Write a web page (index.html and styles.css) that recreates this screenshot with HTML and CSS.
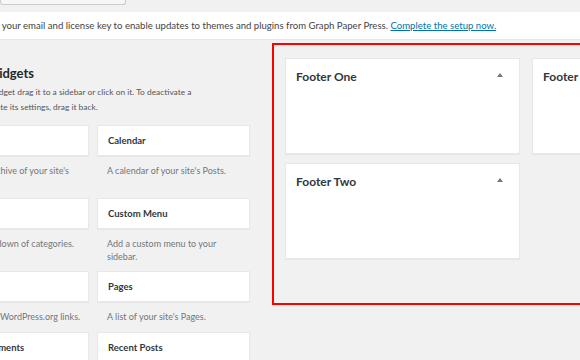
FILE: index.html
```html
<!DOCTYPE html>
<html>
<head>
    <title>Widgets</title>
    <link rel="stylesheet" href="styles.css">
</head>
<body>
    <div class="top-bar">
        <span class="top-button"></span>
    </div>
    <div class="notice">
        <p>Enter your email and license key to enable updates to themes and plugins from Graph Paper Press. <a href="#">Complete the setup now.</a></p>
    </div>
    <div class="widgets-area">
        <div class="available">
            <h2>Available Widgets</h2>
            <p class="intro">To activate a widget drag it to a sidebar or click on it. To deactivate a<br>widget and delete its settings, drag it back.</p>
            <div class="widget-list">
                <div class="widget">
                    <div class="widget-top">Archives</div>
                    <p class="widget-desc">A monthly archive of your site's<br>Posts.</p>
                </div>
                <div class="widget">
                    <div class="widget-top">Calendar</div>
                    <p class="widget-desc">A calendar of your site's Posts.</p>
                </div>
                <div class="widget">
                    <div class="widget-top">Categories</div>
                    <p class="widget-desc">A list or dropdown of categories.</p>
                </div>
                <div class="widget">
                    <div class="widget-top">Custom Menu</div>
                    <p class="widget-desc">Add a custom menu to your<br>sidebar.</p>
                </div>
                <div class="widget">
                    <div class="widget-top">Meta</div>
                    <p class="widget-desc">Login, RSS, &amp; WordPress.org links.</p>
                </div>
                <div class="widget">
                    <div class="widget-top">Pages</div>
                    <p class="widget-desc">A list of your site's Pages.</p>
                </div>
                <div class="widget">
                    <div class="widget-top">Recent Comments</div>
                    <p class="widget-desc">Your site's most recent comments.</p>
                </div>
                <div class="widget">
                    <div class="widget-top">Recent Posts</div>
                    <p class="widget-desc">Your site's most recent Posts.</p>
                </div>
            </div>
        </div>
        <div class="sidebars">
            <div class="sidebar">
                <h3>Footer One</h3>
                <span class="toggle"></span>
            </div>
            <div class="sidebar">
                <h3>Footer Three</h3>
                <span class="toggle"></span>
            </div>
            <div class="sidebar">
                <h3>Footer Two</h3>
                <span class="toggle"></span>
            </div>
        </div>
    </div>
</body>
</html>
```

FILE: styles.css
```css
body {
    margin: 0;
    background-color: #f1f1f1;
    font-family: Lato, "Open Sans", sans-serif;
    color: #444;
    overflow: hidden;
    height: 360px;
}

/* top button, mostly scrolled away */
.top-bar {
    height: 12px;
}
.top-bar .top-button {
    display: block;
    width: 126px;
    height: 5px;
    background-color: #f7f7f7;
    border: 1px solid #ccc;
    border-top: none;
    border-radius: 0 0 3px 3px;
    box-sizing: border-box;
}

.notice {
    background-color: #fff;
    height: 27px;
    box-shadow: 0 1px 1px rgba(0, 0, 0, 0.04);
    overflow: hidden;
}
.notice p {
    margin: 0 0 0 -23px;
    padding-top: 7px;
    font-size: 9.6px;
    line-height: 14px;
    white-space: nowrap;
}
.notice a {
    color: #0073aa;
}

.widgets-area {
    display: flex;
    gap: 22px;
    margin-left: -64px;
}

.available {
    width: 314px;
    flex: none;
}
.available h2 {
    margin: 26px 0 0 -6px;
    font-size: 13px;
    line-height: 17px;
    font-weight: 700;
    color: #23282d;
}
.available .intro {
    margin: 3px 0 0 6px;
    font-size: 8.4px;
    line-height: 15px;
    color: #555;
    white-space: nowrap;
}

.widget-list {
    display: grid;
    grid-template-columns: 153px 153px;
    column-gap: 8px;
    margin-top: 10px;
}
.widget-top {
    height: 31px;
    box-sizing: border-box;
    background-color: #fff;
    border: 1px solid #e8e8e8;
    box-shadow: 0 1px 1px rgba(0, 0, 0, 0.04);
    padding: 8px 10px;
    font-size: 9.5px;
    line-height: 14px;
    font-weight: 700;
    color: #32373c;
    white-space: nowrap;
}
.widget-desc {
    margin: 9px 0 8px;
    padding-left: 10px;
    font-size: 9px;
    line-height: 12.5px;
    color: #72777c;
    white-space: nowrap;
}

.sidebars {
    flex: none;
    width: 420px;
    height: 262px;
    box-sizing: border-box;
    margin-top: 4px;
    border: 2px solid #ff0000;
    padding: 13px 0 0 11px;
    display: grid;
    grid-template-columns: 235px 235px;
    grid-auto-rows: 96px;
    column-gap: 12px;
    row-gap: 9px;
}
.sidebar {
    background-color: #fff;
    border: 1px solid #e8e8e8;
    box-shadow: 0 1px 1px rgba(0, 0, 0, 0.04);
    display: flex;
    justify-content: space-between;
    align-items: flex-start;
    padding: 10px 16px 0 10px;
}
.sidebar h3 {
    margin: 0;
    font-size: 12px;
    line-height: 16px;
    font-weight: 700;
    color: #32373c;
}
.sidebar .toggle {
    margin-top: 4px;
    width: 0;
    height: 0;
    border-left: 3px solid transparent;
    border-right: 3px solid transparent;
    border-bottom: 4px solid #72777c;
}
```
